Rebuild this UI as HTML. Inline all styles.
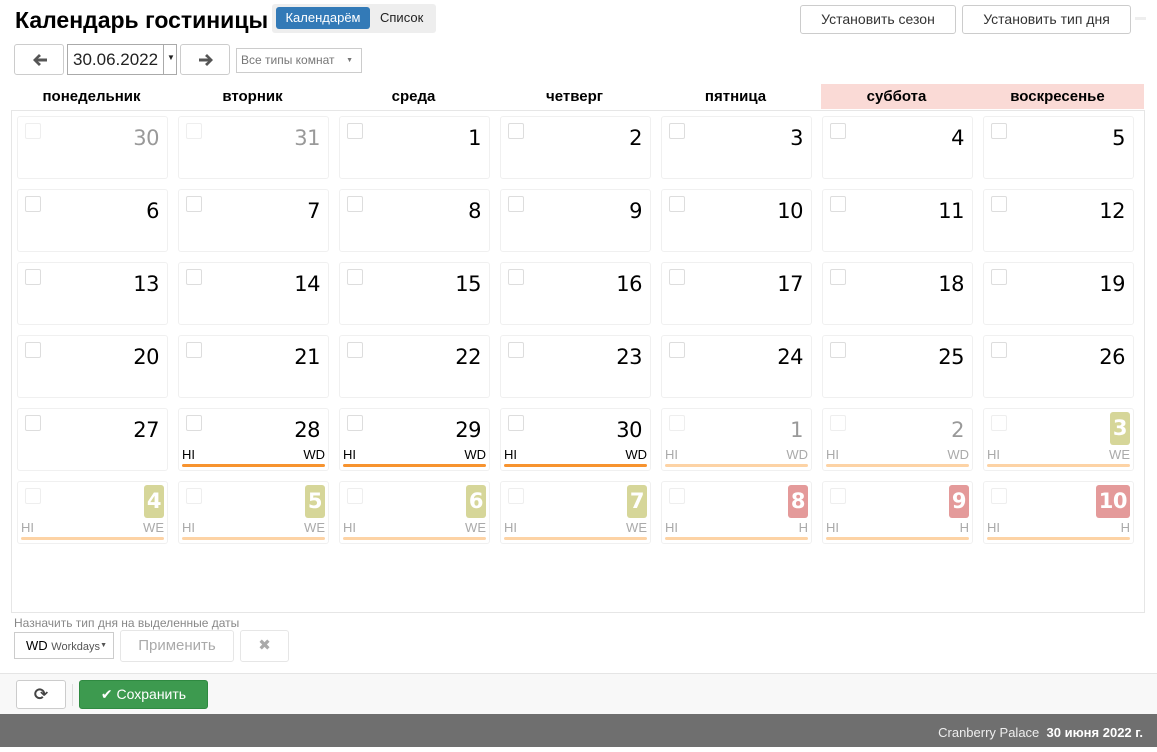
<!DOCTYPE html><html><head><meta charset="utf-8"><style>
*{box-sizing:border-box;margin:0;padding:0}
body{width:1157px;height:747px;position:relative;background:#fff;font-family:"Liberation Sans","DejaVu Sans",sans-serif;color:#000;overflow:hidden}
.a{position:absolute}
.btn{position:absolute;border:1px solid #ccc;border-radius:3px;background:#fff;color:#333;font-size:14px;text-align:center}
.c{position:absolute;width:151px;height:63px;border:1px solid #f0f0f0;border-radius:3px;background:#fff}
.c i{position:absolute;left:7px;top:6px;width:16px;height:16px;border:1px solid #ddd;border-radius:2px}
.c b{position:absolute;right:8px;top:8px;font-size:21px;font-weight:normal;line-height:26px;font-family:"DejaVu Sans",sans-serif;letter-spacing:-0.5px}
.o i{border-color:#eee}.o b{color:#999}
.c .l{position:absolute;left:3px;right:3px;top:38px;font-size:13px;line-height:16px;color:#000}
.c .l span{float:right}
.c .ln{position:absolute;left:3px;right:3px;top:55px;height:3px;border-radius:2px;background:#f7932f}
.o .l{color:#aaa}.o .ln{background:#fdd3a5}
.c b.g,.c b.r{color:#fff;font-weight:bold;top:3px;right:3px;padding:3px 3px;border-radius:3px;line-height:27px}
.g{background:#d6d699}.r{background:#e49a9a}
.h{position:absolute;top:84px;height:25px;width:161px;text-align:center;font-size:15px;font-weight:bold;line-height:26px}
</style></head><body>
<div class="a" style="left:15px;top:5px;font-size:23px;font-weight:bold;line-height:30px">Календарь гостиницы</div>
<div class="a" style="left:272px;top:4px;width:164px;height:29px;background:#eee;border-radius:3px"></div>
<div class="a" style="left:276px;top:7px;width:94px;height:22px;background:#337ab7;border-radius:3px;color:#fff;font-size:13px;text-align:center;line-height:22px">Календарём</div>
<div class="a" style="left:380px;top:7px;font-size:13px;line-height:22px;color:#222">Список</div>
<div class="btn" style="left:800px;top:5px;width:156px;height:29px;line-height:27px">Установить сезон</div>
<div class="btn" style="left:962px;top:5px;width:169px;height:29px;line-height:27px">Установить тип дня</div>
<div class="a" style="left:1135px;top:17px;width:11px;height:3px;background:#eee"></div>
<div class="btn" style="left:14px;top:44px;width:50px;height:31px"><svg width="16" height="14" viewBox="0 0 16 14" style="position:absolute;left:17px;top:8px"><path d="M1 7 L7 1 L9 3 L6 5.5 H15 V8.5 H6 L9 11 L7 13 Z" fill="#555"/></svg></div>
<div class="btn" style="left:67px;top:44px;width:110px;height:31px;border-color:#aaa;border-radius:0;text-align:left;padding-left:5px;font-size:17px;line-height:29px;color:#222">30.06.2022<span style="position:absolute;left:95px;top:0;width:1px;height:29px;background:#aaa"></span><span style="position:absolute;left:99px;top:-2px;font-size:8px">▼</span></div>
<div class="btn" style="left:180px;top:44px;width:50px;height:31px"><svg width="16" height="14" viewBox="0 0 16 14" style="position:absolute;left:17px;top:8px"><path d="M15 7 L9 1 L7 3 L10 5.5 H1 V8.5 H10 L7 11 L9 13 Z" fill="#555"/></svg></div>
<div class="a" style="left:236px;top:48px;width:126px;height:25px;border:1px solid #ccc;font-size:12px;color:#777;line-height:23px;padding-left:4px">Все типы комнат <span style="font-size:7px;position:absolute;right:8px">▼</span></div>
<div class="a" style="left:821px;top:84px;width:323px;height:25px;background:#fadad6"></div>
<div class="h" style="left:11px">понедельник</div><div class="h" style="left:172px">вторник</div><div class="h" style="left:333px">среда</div><div class="h" style="left:494px">четверг</div><div class="h" style="left:655px">пятница</div><div class="h" style="left:816px">суббота</div><div class="h" style="left:977px">воскресенье</div>
<div class="a" style="left:11px;top:110px;width:1134px;height:503px;border:1px solid #e6e6e6"></div>

<div class="c o" style="left:17px;top:116px"><i></i><b>30</b></div>
<div class="c o" style="left:178px;top:116px"><i></i><b>31</b></div>
<div class="c" style="left:339px;top:116px"><i></i><b>1</b></div>
<div class="c" style="left:500px;top:116px"><i></i><b>2</b></div>
<div class="c" style="left:661px;top:116px"><i></i><b>3</b></div>
<div class="c" style="left:822px;top:116px"><i></i><b>4</b></div>
<div class="c" style="left:983px;top:116px"><i></i><b>5</b></div>

<div class="c" style="left:17px;top:189px"><i></i><b>6</b></div>
<div class="c" style="left:178px;top:189px"><i></i><b>7</b></div>
<div class="c" style="left:339px;top:189px"><i></i><b>8</b></div>
<div class="c" style="left:500px;top:189px"><i></i><b>9</b></div>
<div class="c" style="left:661px;top:189px"><i></i><b>10</b></div>
<div class="c" style="left:822px;top:189px"><i></i><b>11</b></div>
<div class="c" style="left:983px;top:189px"><i></i><b>12</b></div>

<div class="c" style="left:17px;top:262px"><i></i><b>13</b></div>
<div class="c" style="left:178px;top:262px"><i></i><b>14</b></div>
<div class="c" style="left:339px;top:262px"><i></i><b>15</b></div>
<div class="c" style="left:500px;top:262px"><i></i><b>16</b></div>
<div class="c" style="left:661px;top:262px"><i></i><b>17</b></div>
<div class="c" style="left:822px;top:262px"><i></i><b>18</b></div>
<div class="c" style="left:983px;top:262px"><i></i><b>19</b></div>

<div class="c" style="left:17px;top:335px"><i></i><b>20</b></div>
<div class="c" style="left:178px;top:335px"><i></i><b>21</b></div>
<div class="c" style="left:339px;top:335px"><i></i><b>22</b></div>
<div class="c" style="left:500px;top:335px"><i></i><b>23</b></div>
<div class="c" style="left:661px;top:335px"><i></i><b>24</b></div>
<div class="c" style="left:822px;top:335px"><i></i><b>25</b></div>
<div class="c" style="left:983px;top:335px"><i></i><b>26</b></div>

<div class="c" style="left:17px;top:408px"><i></i><b>27</b></div>
<div class="c" style="left:178px;top:408px"><i></i><b>28</b><div class="l">HI<span>WD</span></div><div class="ln"></div></div>
<div class="c" style="left:339px;top:408px"><i></i><b>29</b><div class="l">HI<span>WD</span></div><div class="ln"></div></div>
<div class="c" style="left:500px;top:408px"><i></i><b>30</b><div class="l">HI<span>WD</span></div><div class="ln"></div></div>
<div class="c o" style="left:661px;top:408px"><i></i><b>1</b><div class="l">HI<span>WD</span></div><div class="ln"></div></div>
<div class="c o" style="left:822px;top:408px"><i></i><b>2</b><div class="l">HI<span>WD</span></div><div class="ln"></div></div>
<div class="c o" style="left:983px;top:408px"><i></i><b class="g">3</b><div class="l">HI<span>WE</span></div><div class="ln"></div></div>

<div class="c o" style="left:17px;top:481px"><i></i><b class="g">4</b><div class="l">HI<span>WE</span></div><div class="ln"></div></div>
<div class="c o" style="left:178px;top:481px"><i></i><b class="g">5</b><div class="l">HI<span>WE</span></div><div class="ln"></div></div>
<div class="c o" style="left:339px;top:481px"><i></i><b class="g">6</b><div class="l">HI<span>WE</span></div><div class="ln"></div></div>
<div class="c o" style="left:500px;top:481px"><i></i><b class="g">7</b><div class="l">HI<span>WE</span></div><div class="ln"></div></div>
<div class="c o" style="left:661px;top:481px"><i></i><b class="r">8</b><div class="l">HI<span>H</span></div><div class="ln"></div></div>
<div class="c o" style="left:822px;top:481px"><i></i><b class="r">9</b><div class="l">HI<span>H</span></div><div class="ln"></div></div>
<div class="c o" style="left:983px;top:481px"><i></i><b class="r">10</b><div class="l">HI<span>H</span></div><div class="ln"></div></div>

<div class="a" style="left:14px;top:615px;font-size:12px;color:#888;line-height:16px">Назначить тип дня на выделенные даты</div>
<div class="a" style="left:14px;top:632px;width:100px;height:27px;border:1px solid #ccc;font-size:13px;line-height:25px;padding-left:11px">WD <span style="font-size:11px;color:#555">Workdays</span><span style="font-size:7px;color:#555;position:absolute;right:6px">▼</span></div>
<div class="btn" style="left:120px;top:630px;width:114px;height:32px;line-height:30px;font-size:15px;color:#aaa;border-color:#e6e6e6">Применить</div>
<div class="btn" style="left:240px;top:630px;width:49px;height:32px;line-height:30px;font-size:15px;color:#aaa;border-color:#e6e6e6;font-weight:bold">✖</div>
<div class="a" style="left:0;top:673px;width:1157px;height:41px;background:#f8f8f8;border-top:1px solid #e5e5e5"></div>
<div class="btn" style="left:16px;top:680px;width:50px;height:29px;line-height:27px;font-size:17px;color:#444;font-weight:bold">⟳</div>
<div class="a" style="left:72px;top:684px;width:1px;height:22px;background:#ddd"></div>
<div class="a" style="left:79px;top:680px;width:129px;height:29px;background:#3d9a4f;border:1px solid #2f8a41;border-radius:3px;color:#fff;font-size:14px;line-height:27px;text-align:center">✔ Сохранить</div>
<div class="a" style="left:0;top:714px;width:1157px;height:33px;background:#6f6f6f"></div>
<div class="a" style="right:14px;top:714px;line-height:38px;font-size:13px;color:#eee">Cranberry Palace&nbsp; <b style="color:#fff">30 июня 2022 г.</b></div>
</body></html>
